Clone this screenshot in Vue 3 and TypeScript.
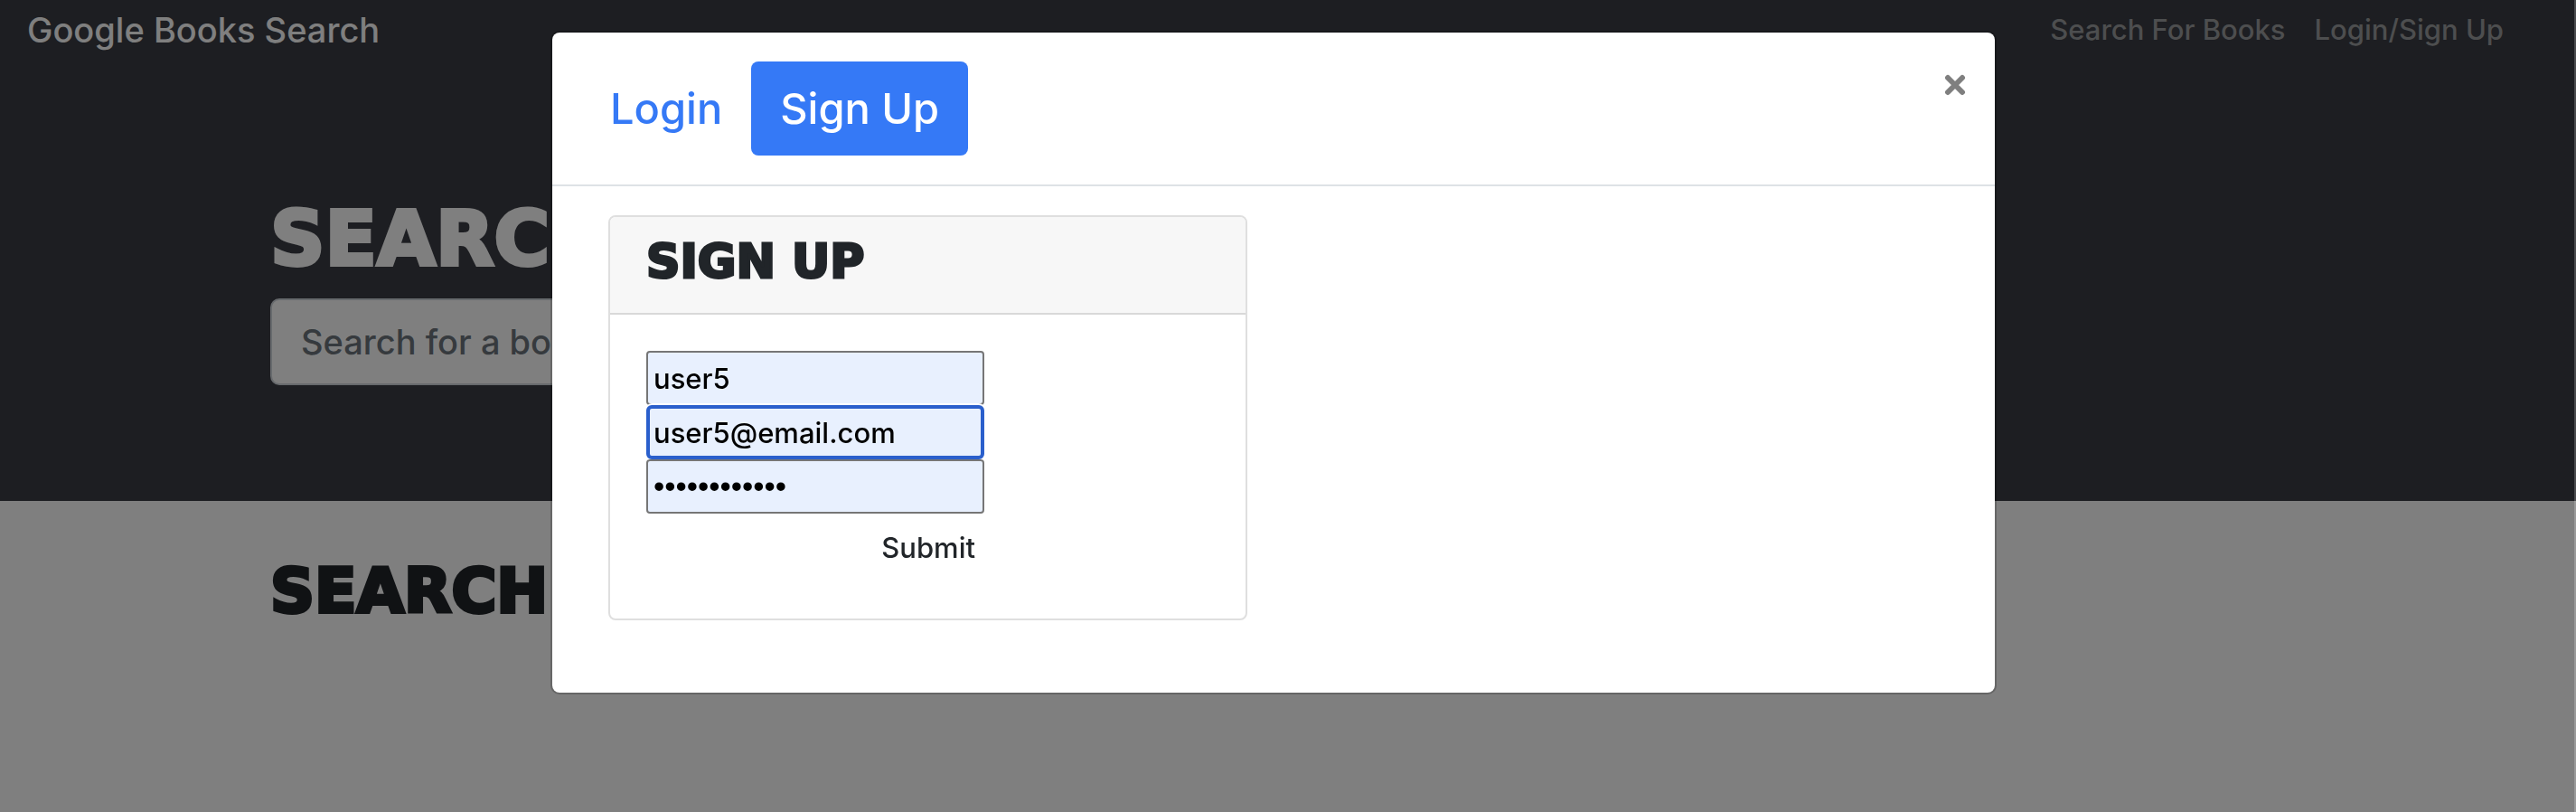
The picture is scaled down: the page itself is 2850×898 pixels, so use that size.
<script setup lang="ts">
import { ref } from 'vue'

const tab = ref<'login' | 'signup'>('signup')
const query = ref('')
const username = ref('user5')
const email = ref('user5@email.com')
const password = ref('password1234')
</script>

<template>
  <div class="page">
    <nav class="navbar">
      <a class="brand" href="#">Google Books Search</a>
      <div class="links">
        <a href="#">Search For Books</a>
        <a href="#">Login/Sign Up</a>
      </div>
    </nav>
    <header class="hero">
      <div class="container">
        <h1>SEARCH</h1>
        <form class="search" @submit.prevent>
          <input v-model="query" type="text" aria-label="Search for a book" placeholder="Search for a book" />
        </form>
      </div>
    </header>
    <main class="container results">
      <h2>SEARCH</h2>
    </main>
  </div>

  <div class="backdrop">
    <div class="modal" role="dialog" aria-modal="true">
      <div class="modal-header">
        <div class="tabs">
          <button type="button" :class="{ active: tab === 'login' }" @click="tab = 'login'">Login</button>
          <button type="button" :class="{ active: tab === 'signup' }" @click="tab = 'signup'">Sign Up</button>
        </div>
        <button class="close" type="button" aria-label="Close">
          <svg viewBox="0 0 24 24" width="24" height="24"><path d="M4 4L20 20M20 4L4 20" /></svg>
        </button>
      </div>
      <div class="modal-body">
        <section class="card">
          <h3>SIGN UP</h3>
          <form @submit.prevent>
            <input v-model="username" type="text" aria-label="Username" />
            <input v-model="email" class="focused" type="email" aria-label="Email" />
            <input v-model="password" type="password" aria-label="Password" />
            <button type="submit">Submit</button>
          </form>
        </section>
      </div>
    </div>
  </div>
</template>

<style>
body {
  margin: 0;
  background: #fff;
}
</style>

<style scoped>
* {
  box-sizing: border-box;
}
.page,
.backdrop {
  font-family: Inter, Roboto, sans-serif;
  font-size: 31px;
  font-weight: 450;
  line-height: 48px;
}
.page {
  min-height: 100vh;
  padding-right: 32px;
  overflow: hidden;
  background: linear-gradient(#3a3c44 554px, #fff 554px);
}
button,
input {
  font: inherit;
}
a {
  text-decoration: none;
}
h1,
h2,
h3 {
  margin: 0;
  font-family: "DejaVu Sans", sans-serif;
  font-weight: 700;
  -webkit-text-stroke: 4px currentColor;
}
.navbar {
  display: flex;
  align-items: center;
  justify-content: space-between;
  height: 66px;
  padding: 0 48px 0 30px;
}
.brand {
  color: #fff;
  font-size: 38px;
}
.links {
  display: flex;
  gap: 32px;
}
.links a {
  color: #9b9c9f;
}
.container {
  width: 100%;
  max-width: 2280px;
  margin: 0 auto;
  padding: 0 30px;
}
.hero {
  height: 488px;
  padding-top: 150px;
  color: #fff;
}
h1 {
  margin-bottom: 18px;
  font-size: 84px;
  line-height: 96px;
  white-space: nowrap;
}
.search input {
  display: block;
  width: 66%;
  height: 96px;
  padding: 0 32px;
  border: 2px solid #ced4da;
  border-radius: 10px;
  background: #fff;
  font-size: 38px;
}
.search input::placeholder {
  color: #6c757d;
  opacity: 1;
}
.results {
  padding-top: 62px;
  color: #212529;
}
h2 {
  font-size: 68px;
  line-height: 76px;
  white-space: nowrap;
}
.backdrop {
  position: fixed;
  inset: 0;
  padding: 34px 30px 34px 0;
  border-right: 2px solid rgba(255, 255, 255, 0.2);
  background: rgba(0, 0, 0, 0.5);
  color: #212529;
}
.modal {
  width: 100%;
  max-width: 1600px;
  margin: 0 auto;
  border: 2px solid rgba(0, 0, 0, 0.2);
  border-radius: 10px;
  background: #fff;
  background-clip: padding-box;
}
.modal-header {
  display: flex;
  align-items: flex-start;
  justify-content: space-between;
  padding: 32px;
  border-bottom: 2px solid #dee2e6;
}
.tabs {
  display: flex;
}
.tabs button {
  padding: 16px 32px;
  border: 0;
  border-radius: 8px;
  background: none;
  color: #3579f6;
  font-size: 47px;
  line-height: 72px;
}
.tabs button.active {
  background: #3579f6;
  color: #fff;
}
.close {
  display: flex;
  padding: 14px 0;
  border: 0;
  background: none;
}
.close svg {
  fill: none;
  stroke: #7f7f7f;
  stroke-width: 6;
  stroke-linecap: round;
}
.modal-body {
  padding: 32px 62px 80px;
}
.card {
  width: 48%;
  border: 2px solid #dfdfdf;
  border-radius: 8px;
}
h3 {
  padding: 20px 40px 28px;
  border-bottom: 2px solid #d9d9d9;
  border-radius: 6px 6px 0 0;
  background: #f7f7f7;
  font-size: 52px;
  line-height: 58px;
  -webkit-text-stroke-width: 3px;
}
.card form {
  display: flex;
  flex-direction: column;
  width: 454px;
  padding: 40px;
}
.card input {
  width: 100%;
  height: 60px;
  padding: 2px 6px;
  border: 2px solid #767676;
  border-radius: 4px;
  background: #e8f0fe;
  color: #000;
}
.card input.focused {
  padding: 0 4px;
  border: 4px solid #2a5fcc;
  border-radius: 6px;
  outline: 0;
  box-shadow: 0 -2px 0 #fff;
}
.card input[type='password'] {
  position: relative;
  font-family: "Liberation Sans", sans-serif;
  font-size: 35px;
}
.card form button {
  align-self: flex-end;
  padding: 14px 10px;
  border: 0;
  background: none;
  color: #212529;
}
</style>
